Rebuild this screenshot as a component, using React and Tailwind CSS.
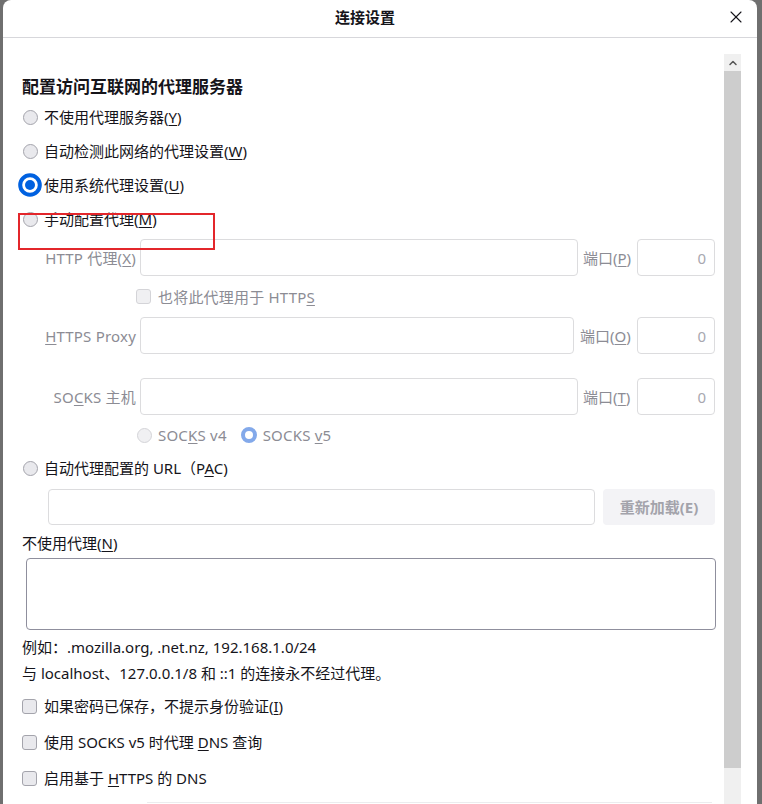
import { X, ChevronUp } from "lucide-react";

const font = { fontFamily: '"Noto Sans", "Noto Sans CJK SC", sans-serif' };

const Radio = ({ disabled }) => (
  <span className="flex w-[24px] h-[24px] items-center justify-center shrink-0">
    <span
      className={
        "block w-[15px] h-[15px] rounded-full border " +
        (disabled ? "border-[#d4d4d8] bg-[#f0f0f2]" : "border-[#a4a4ac] bg-[#e9e9ed]")
      }
    />
  </span>
);

const RadioOn = () => (
  <span className="flex w-[24px] h-[24px] items-center justify-center shrink-0">
    <svg width="24" height="24" viewBox="0 0 24 24">
      <circle cx="12" cy="12" r="9.8" fill="white" stroke="#0061e0" strokeWidth="4" />
      <circle cx="12" cy="12" r="5" fill="#0061e0" />
    </svg>
  </span>
);

const Check = ({ disabled }) => (
  <span
    className={
      "block w-[15px] h-[15px] rounded-[3px] border shrink-0 " +
      (disabled ? "border-[#d4d4d8] bg-[#f0f0f2]" : "border-[#a4a4ac] bg-[#e9e9ed]")
    }
  />
);

const Field = ({ w }) => (
  <div className={"h-full rounded-[4px] border border-[#dcdcde] bg-white " + w} />
);

const Port = () => (
  <div className="h-full w-[78px] rounded-[4px] border border-[#dcdcde] bg-white flex items-center justify-end pr-[8px] text-[#a8a8b0]">
    0
  </div>
);

const ProxyRow = ({ label, keyLetter, rest, pre, fieldW, portKey, portW, portPl, mt }) => (
  <div className={"flex h-[37px] items-center text-[#8c8c94] " + mt}>
    <div className="w-[118px] pr-[4px] text-right tracking-[0.2px]">
      {pre}
      <u className="underline-offset-2">{keyLetter}</u>
      {rest}
      {label}
    </div>
    <Field w={fieldW} />
    <div className={"shrink-0 " + portW + " " + portPl}>
      端口(<u className="underline-offset-2">{portKey}</u>)
    </div>
    <Port />
  </div>
);

export default function App() {
  return (
    <div className="flex w-[762px] h-[804px] bg-[#6f6f6f] overflow-hidden" style={font}>
      <div className="ml-[3px] w-[754px] h-full bg-white rounded-t-[8px] flex flex-col text-[15px] text-[#15141a] leading-[20px]">
        {/* header */}
        <div className="flex items-center h-[38px] pb-[3px] border-b border-[#d7d7db] shrink-0">
          <span className="ml-[332px] font-bold text-[15px]">连接设置</span>
          <X className="ml-auto mr-[11px]" size={20} strokeWidth={1.3} color="#15141a" />
        </div>

        <div className="flex flex-1 min-h-0">
          {/* content */}
          <div className="w-[721px] pl-[19px] pt-[38px]">
            <div className="h-[22px] flex items-center text-[17px] font-bold">配置访问互联网的代理服务器</div>

            <div className="mt-[2px] h-[34px] flex items-center -ml-[4px] gap-[2px]">
              <Radio />
              <span>
                不使用代理服务器(<u className="underline-offset-2">Y</u>)
              </span>
            </div>
            <div className="h-[34px] flex items-center -ml-[4px] gap-[2px]">
              <Radio />
              <span>
                自动检测此网络的代理设置(<u className="underline-offset-2">W</u>)
              </span>
            </div>
            <div className="h-[34px] flex items-center -ml-[4px] gap-[2px]">
              <RadioOn />
              <span>
                使用系统代理设置(<u className="underline-offset-2">U</u>)
              </span>
            </div>
            <div className="relative h-[34px] flex items-center -ml-[4px] gap-[2px]">
              <Radio />
              <span>
                手动配置代理(<u className="underline-offset-2">M</u>)
              </span>
              <div className="absolute left-[0px] top-[11px] w-[197px] h-[37px] border-2 border-[#e3262b]" />
            </div>

            <ProxyRow
              mt="mt-[3px]"
              pre="HTTP 代理("
              keyLetter="X"
              rest=")"
              fieldW="w-[438px]"
              portKey="P"
              portW="w-[59px]"
              portPl="pl-[5px]"
            />

            <div className="h-[41px] flex items-center gap-[7px] pl-[114px] text-[#8c8c94]">
              <Check disabled />
              <span className="tracking-[0.2px]">
                也将此代理用于 HTTP<u className="underline-offset-2">S</u>
              </span>
            </div>

            <ProxyRow
              pre=""
              keyLetter="H"
              rest="TTPS Proxy"
              fieldW="w-[434px]"
              portKey="O"
              portW="w-[63px]"
              portPl="pl-[6px]"
            />

            <ProxyRow
              mt="mt-[24px]"
              pre="SO"
              keyLetter="C"
              rest="KS 主机"
              fieldW="w-[438px]"
              portKey="T"
              portW="w-[59px]"
              portPl="pl-[5px]"
            />

            <div className="h-[40px] flex items-center pl-[110px] text-[#8c8c94] tracking-[0.2px]">
              <Radio disabled />
              <span className="ml-[2px]">
                SOC<u className="underline-offset-2">K</u>S v4
              </span>
              <span className="ml-[10px] flex w-[24px] h-[24px] items-center justify-center">
                <svg width="16" height="16" viewBox="0 0 16 16">
                  <circle cx="8" cy="8" r="6" fill="white" stroke="#83a9ea" strokeWidth="4" />
                </svg>
              </span>
              <span className="ml-[2px]">
                SOCKS <u className="underline-offset-2">v</u>5
              </span>
            </div>

            <div className="h-[26px] flex items-center -ml-[4px] gap-[2px]">
              <Radio />
              <span>
                自动代理配置的 URL（P<u className="underline-offset-2">A</u>C)
              </span>
            </div>

            <div className="mt-[8px] h-[36px] flex pl-[26px]">
              <div className="h-full w-[547px] rounded-[4px] border border-[#dcdcde]" />
              <div className="ml-[8px] h-full w-[112px] rounded-[4px] bg-[#f3f3f6] flex items-center justify-center font-bold text-[#a3a3ab]">
                重新加载(E)
              </div>
            </div>

            <div className="h-[33px] flex items-center pt-[3px]">
              不使用代理(<u className="underline-offset-2">N</u>)
            </div>

            <div className="ml-[4px] w-[690px] h-[72px] rounded-[4px] border border-[#8f8f9d]" />

            <div className="mt-[2px] h-[30px] flex items-center">例如：.mozilla.org, .net.nz, 192.168.1.0/24</div>
            <div className="h-[22px] flex items-center">与 localhost、127.0.0.1/8 和 ::1 的连接永不经过代理。</div>

            <div className="mt-[4px] h-[36px] flex items-center gap-[7px]">
              <Check />
              <span>
                如果密码已保存，不提示身份验证(<u className="underline-offset-2">I</u>)
              </span>
            </div>
            <div className="h-[36px] flex items-center gap-[7px]">
              <Check />
              <span>
                使用 SOCKS v5 时代理 <u className="underline-offset-2">D</u>NS 查询
              </span>
            </div>
            <div className="h-[36px] flex items-center gap-[7px]">
              <Check />
              <span>
                启用基于 <u className="underline-offset-2">H</u>TTPS 的 DNS
              </span>
            </div>
            <div className="mt-[6px] ml-[125px] w-[565px] h-px bg-[#ececee]" />
          </div>

          {/* scrollbar */}
          <div className="w-[17px] pt-[16px] flex flex-col">
            <div className="h-[17px] bg-[#f0f0f0] flex items-center justify-center">
              <ChevronUp size={12} strokeWidth={3} color="#555" />
            </div>
            <div className="h-[697px] bg-[#cdcdcd]" />
            <div className="flex-1 bg-[#f0f0f0]" />
          </div>
        </div>
      </div>
    </div>
  );
}
